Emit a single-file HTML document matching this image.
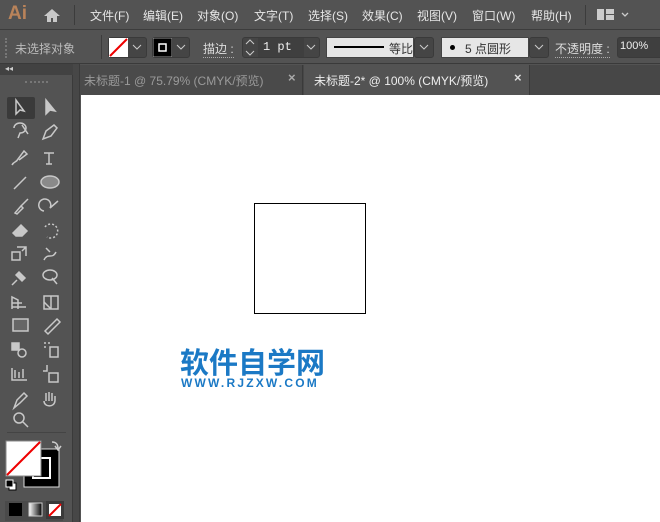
<!DOCTYPE html>
<html><head><meta charset="utf-8"><style>
*{margin:0;padding:0;box-sizing:border-box}
body{width:660px;height:522px;overflow:hidden;background:#535353;font-family:"Liberation Sans","Noto Sans CJK SC",sans-serif;color:#ddd;position:relative;font-size:12px}
.abs{position:absolute}
.menu span{position:absolute;top:7px;font-size:12px;color:#e6e6e6}
.dd{position:absolute;background:#454545;border:1px solid #3a3a3a;border-radius:3px}
</style></head><body>
<div class="abs" style="left:0;top:0;width:660px;height:30px;background:#535353;border-bottom:1px solid #3c3c3c"></div>
<div class="abs" style="left:8px;top:3px;font-size:19px;color:#b9835a;font-weight:bold">Ai</div>
<svg class="abs" style="left:43px;top:8px" width="18" height="15"><path d="M9 1L1 8h3v6h4v-4h2v4h4V8h3z" fill="#c8c8c8"/></svg>
<div class="abs" style="left:74px;top:5px;width:1px;height:20px;background:#3c3c3c"></div>
<div class="menu">
<span style="left:90px">文件(F)</span><span style="left:143px">编辑(E)</span><span style="left:197px">对象(O)</span><span style="left:254px">文字(T)</span><span style="left:308px">选择(S)</span><span style="left:362px">效果(C)</span><span style="left:417px">视图(V)</span><span style="left:472px">窗口(W)</span><span style="left:531px">帮助(H)</span>
</div>
<div class="abs" style="left:585px;top:5px;width:1px;height:20px;background:#3c3c3c"></div>
<svg class="abs" style="left:597px;top:9px" width="34" height="12"><rect x="0" y="0" width="7" height="11" fill="#ccc"/><rect x="9" y="0" width="8" height="5" fill="#ccc"/><rect x="9" y="6" width="8" height="5" fill="#ccc"/><path d="M25 4l3 3 3-3" stroke="#ccc" fill="none" stroke-width="1.3"/></svg>
<div class="abs" style="left:0;top:31px;width:660px;height:33px;background:#535353;border-bottom:1px solid #3a3a3a"></div>
<div class="abs" style="left:5px;top:38px;width:2px;height:20px;border-left:2px dotted #777"></div>
<div class="abs" style="left:15px;top:40px;color:#bbb">未选择对象</div>
<div class="abs" style="left:101px;top:35px;width:1px;height:24px;background:#3c3c3c"></div>
<div class="dd" style="left:108px;top:37px;width:39px;height:21px"></div>
<svg class="abs" style="left:109px;top:38px" width="19" height="19"><rect width="19" height="19" fill="#fff"/><line x1="1" y1="18" x2="18" y2="1" stroke="#e00" stroke-width="2"/></svg>
<svg class="abs" style="left:132px;top:44px" width="10" height="6"><path d="M1 1l4 4 4-4" stroke="#ccc" fill="none"/></svg>
<div class="dd" style="left:152px;top:37px;width:38px;height:21px"></div>
<svg class="abs" style="left:153px;top:38px" width="19" height="19"><rect width="19" height="19" fill="#000" stroke="#999"/><rect x="6" y="6" width="7" height="7" fill="none" stroke="#fff" stroke-width="1.5"/></svg>
<svg class="abs" style="left:176px;top:44px" width="10" height="6"><path d="M1 1l4 4 4-4" stroke="#ccc" fill="none"/></svg>
<div class="abs" style="left:203px;top:40px;color:#ddd;border-bottom:1px dotted #aaa">描边 :</div>
<div class="dd" style="left:242px;top:37px;width:78px;height:21px"></div>
<div class="abs" style="left:258px;top:38px;width:46px;height:19px;background:#3f3f3f"></div>
<div class="abs" style="left:263px;top:40px;font-family:'Liberation Mono',monospace;color:#eee">1 pt</div>
<svg class="abs" style="left:245px;top:39px" width="10" height="17"><path d="M1 5l4-4 4 4M1 12l4 4 4-4" stroke="#ccc" fill="none"/></svg>
<svg class="abs" style="left:306px;top:44px" width="10" height="6"><path d="M1 1l4 4 4-4" stroke="#ccc" fill="none"/></svg>
<div class="abs" style="left:326px;top:37px;width:88px;height:21px;background:#e6e6e6;border:1px solid #444"></div>
<div class="abs" style="left:334px;top:46px;width:50px;height:2px;background:#000"></div>
<div class="abs" style="left:389px;top:40px;color:#333">等比</div>
<div class="dd" style="left:414px;top:37px;width:20px;height:21px"></div>
<svg class="abs" style="left:419px;top:44px" width="10" height="6"><path d="M1 1l4 4 4-4" stroke="#ccc" fill="none"/></svg>
<div class="abs" style="left:441px;top:37px;width:88px;height:21px;background:#e6e6e6;border:1px solid #444"></div>
<div class="abs" style="left:450px;top:45px;width:5px;height:5px;border-radius:50%;background:#000"></div>
<div class="abs" style="left:465px;top:40px;color:#333">5 点圆形</div>
<div class="dd" style="left:529px;top:37px;width:20px;height:21px"></div>
<svg class="abs" style="left:534px;top:44px" width="10" height="6"><path d="M1 1l4 4 4-4" stroke="#ccc" fill="none"/></svg>
<div class="abs" style="left:555px;top:40px;color:#ddd;border-bottom:1px dotted #aaa">不透明度 :</div>
<div class="abs" style="left:617px;top:37px;width:50px;height:21px;background:#3f3f3f;border:1px solid #3a3a3a;border-radius:3px"></div>
<div class="abs" style="left:620px;top:40px;color:#eee;font-size:11px">100%</div>
<div class="abs" style="left:74px;top:65px;width:586px;height:30px;background:#474747"></div>
<div class="abs" style="left:74px;top:65px;width:229px;height:30px;background:#4a4a4a;border-right:1px solid #3a3a3a"></div>
<div class="abs" style="left:84px;top:72px;color:#9a9a9a">未标题-1 @ 75.79% (CMYK/预览)</div>
<div class="abs" style="left:288px;top:70px;color:#aaa;font-size:13px;font-weight:bold">×</div>
<div class="abs" style="left:304px;top:65px;width:226px;height:30px;background:#535353;border-right:1px solid #3a3a3a"></div>
<div class="abs" style="left:314px;top:72px;color:#eee">未标题-2* @ 100% (CMYK/预览)</div>
<div class="abs" style="left:514px;top:70px;color:#ddd;font-size:13px;font-weight:bold">×</div>
<div class="abs" style="left:0;top:64px;width:73px;height:458px;background:#535353;border-right:1px solid #3a3a3a"></div>
<div class="abs" style="left:0;top:64px;width:73px;height:11px;background:#424242;color:#ccc;font-size:8px;padding-left:5px;line-height:10px">◂◂</div>
<div class="abs" style="left:25px;top:81px;width:23px;height:2px;border-top:2px dotted #777"></div>
<div class="abs" style="left:73px;top:64px;width:7px;height:458px;background:#474747;border-right:1px solid #3a3a3a"></div>
<div class="abs" style="left:7px;top:97px;width:28px;height:22px;background:#3a3a3a;border-radius:2px"></div>
<svg class="abs" style="left:0;top:95px" width="73" height="340" fill="none" stroke="#c8c8c8" stroke-width="1.5">
<path d="M16 5v14l4-4 4 1z"/><path d="M46 5v14l4-4 5 1z" fill="#c8c8c8"/>
<path d="M14 33a6 5 0 1 1 6 5l-2 5M22 30l6 9" /><path d="M43 44l3-8 8-6 3 3-6 8z"/>
<path d="M12 70c2-4 4-2 6-6l6-8 3 3-8 6M44 58h10M49 58v11M46 69h6"/>
<path d="M14 94l12-12"/><ellipse cx="50" cy="87" rx="9" ry="6" fill="#8a8a8a"/>
<path d="M15 118l6-7 2 2-6 6zM21 111l7-7"/><path d="M44 116a6 6 0 1 1 6-3l8-7"/>
<path d="M13 138l8-8 6 6-5 5h-6z" fill="#c8c8c8"/><path d="M45 132a7 7 0 1 1 2 10" stroke-dasharray="2 2"/>
<path d="M12 157h8v8h-8zM17 152h9v9M22 156l4-4"/><path d="M44 165c4-8 8 0 12-8M46 153l4 4"/>
<path d="M12 190l5-5M16 180l6 6 3-3-6-6z" fill="#c8c8c8"/><ellipse cx="50" cy="180" rx="7" ry="5"/><path d="M52 183l5 6"/>
<path d="M12 214v-12l6 3v9M12 208h10M12 212h14"/><rect x="44" y="201" width="14" height="13"/><path d="M44 207l7 7M51 201v13"/>
<rect x="13" y="224" width="15" height="12" fill="#666"/><path d="M45 236l12-12 3 3-12 12z"/>
<circle cx="22" cy="258" r="4"/><rect x="12" y="248" width="7" height="7" fill="#c8c8c8"/><rect x="50" y="252" width="8" height="10"/><path d="M44 248h2M48 248h2M44 252h2"/>
<path d="M12 273v12h15M15 283v-8M19 283v-6M23 283v-9"/><path d="M47 270v6h-4M49 278h9v9h-9z"/>
<path d="M14 313l3-8 7-7 3 3-7 7z"/><path d="M46 306v-8M49 306v-9M52 306v-8M55 306v-5M44 306c0 6 10 7 11 0"/>
<circle cx="19" cy="323" r="5"/><path d="M23 327l5 5"/>
</svg>
<div class="abs" style="left:7px;top:432px;width:59px;height:1px;background:#444"></div>
<svg class="abs" style="left:0;top:435px" width="73" height="87">
<rect x="24" y="14" width="35" height="38" fill="#000" stroke="#ddd"/><rect x="33" y="23" width="17" height="20" fill="none" stroke="#fff" stroke-width="2"/>
<rect x="6" y="6" width="35" height="35" fill="#fff" stroke="#888"/><line x1="7" y1="40" x2="40" y2="7" stroke="#e00" stroke-width="2"/>
<path d="M52 7c4 0 6 2 6 7M55 11l3 4 3-4" stroke="#ccc" fill="none" stroke-width="1.5"/>
<rect x="9" y="48" width="7" height="7" fill="#fff" stroke="#000"/><rect x="6" y="45" width="7" height="7" fill="#000" stroke="#fff"/>
<rect x="5" y="66" width="58" height="20" fill="#4a4a4a"/>
<rect x="9" y="68" width="13" height="13" fill="#000"/>
<defs><linearGradient id="g"><stop offset="0" stop-color="#fff"/><stop offset="1" stop-color="#000"/></linearGradient></defs>
<rect x="29" y="68" width="13" height="13" fill="url(#g)" stroke="#ccc"/>
<rect x="46" y="66" width="18" height="18" fill="#3a3a3a"/>
<rect x="49" y="69" width="12" height="12" fill="#fff"/><line x1="49" y1="81" x2="61" y2="69" stroke="#e00" stroke-width="2"/>
</svg>
<div class="abs" style="left:81px;top:95px;width:579px;height:427px;background:#fff"></div>
<div class="abs" style="left:254px;top:203px;width:112px;height:111px;border:1px solid #000"></div>
<div class="abs" style="left:180px;top:344px;font-size:29px;font-weight:bold;color:#1b79c5;font-family:'Noto Sans CJK SC',sans-serif;line-height:34px">软件自学网</div>
<div class="abs" style="left:181px;top:376px;font-size:12px;font-weight:bold;color:#1b79c5;letter-spacing:2.2px">WWW.RJZXW.COM</div>
</body></html>
